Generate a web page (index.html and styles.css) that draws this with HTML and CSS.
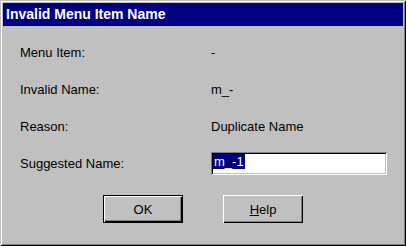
FILE: index.html
```html
<!DOCTYPE html>
<html lang="en">

<head>
    <meta charset="UTF-8">
    <meta name="viewport" content="width=device-width, initial-scale=1.0">
    <title>Invalid Menu Item Name</title>
    <link rel="stylesheet" href="styles.css">
</head>

<body>

    <div class="dialog">
        <div class="titlebar">Invalid Menu Item Name</div>

        <div class="fields">
            <div class="label">Menu Item:</div>
            <div class="value">-</div>

            <div class="label">Invalid Name:</div>
            <div class="value">m_-</div>

            <div class="label">Reason:</div>
            <div class="value">Duplicate Name</div>

            <div class="label">Suggested Name:</div>
            <div class="value">
                <div class="textbox"><span class="selected">m_-1</span></div>
            </div>
        </div>

        <div class="buttons">
            <button class="btn default">OK</button>
            <button class="btn"><u>H</u>elp</button>
        </div>
    </div>

</body>

</html>
```

FILE: styles.css
```css
body {
    margin: 0;
    background-color: #c0c0c0;
    font-family: "Liberation Sans", Arial, sans-serif;
    font-size: 13px;
    color: #000;
}

.dialog {
    width: 406px;
    height: 246px;
    box-sizing: border-box;
    padding: 3px;
    background-color: #c0c0c0;
    box-shadow: inset 1px 1px 0 #c0c0c0, inset -1px -1px 0 #000,
        inset 2px 2px 0 #fff, inset -2px -2px 0 #808080;
}

.titlebar {
    height: 23px;
    line-height: 23px;
    padding-left: 3px;
    background-color: #000080;
    color: #fff;
    font-size: 14px;
    font-weight: bold;
}

.fields {
    display: grid;
    grid-template-columns: 191px 176px;
    grid-template-rows: repeat(4, 37px);
    align-items: center;
    padding: 8px 0 0 17px;
    line-height: 15px;
}

.textbox {
    height: 23px;
    box-sizing: border-box;
    padding: 2px 0 0 2px;
    background-color: #fff;
    box-shadow: inset 1px 1px 0 #808080, inset -1px -1px 0 #fff,
        inset 2px 2px 0 #000, inset -2px -2px 0 #c0c0c0;
    line-height: 15px;
}

.selected {
    display: inline-block;
    padding: 0 1px;
    background-color: #000080;
    color: #fff;
}

.buttons {
    display: flex;
    justify-content: center;
    gap: 40px;
    margin-top: 13px;
}

.btn {
    width: 80px;
    height: 28px;
    padding: 0;
    border: none;
    background-color: #c0c0c0;
    font-family: "Liberation Sans", Arial, sans-serif;
    font-size: 13px;
    color: #000;
    box-shadow: inset 1px 1px 0 #fff, inset -1px -1px 0 #000,
        inset -2px -2px 0 #808080;
}

.btn.default {
    box-shadow: inset 0 0 0 1px #000, inset 2px 2px 0 #fff,
        inset -2px -2px 0 #000, inset -3px -3px 0 #808080;
}
```
